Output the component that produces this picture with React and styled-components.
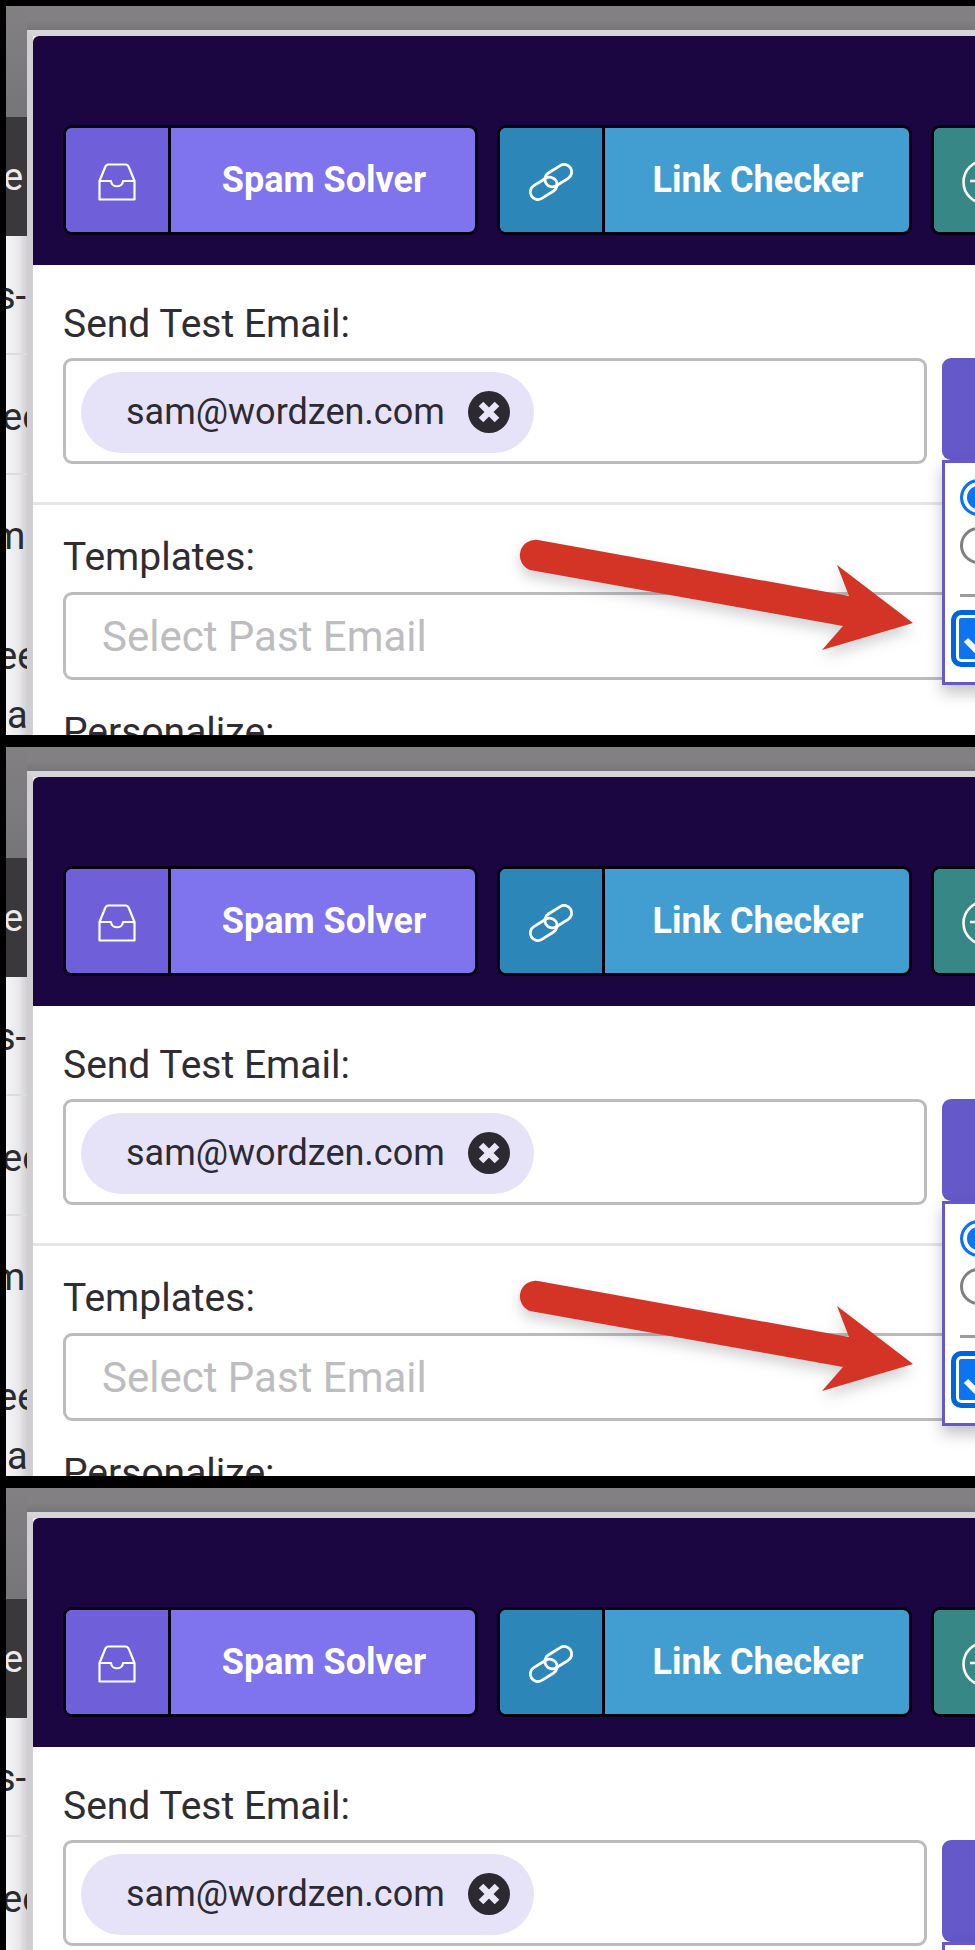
import React from "react";
import styled, { createGlobalStyle } from "styled-components";

const GlobalStyle = createGlobalStyle`
  html, body {
    margin: 0;
    height: 1950px;
    overflow: hidden;
    background: #000;
    font-family: Roboto, "Liberation Sans", sans-serif;
  }
`;

const Page = styled.div`
  display: flex;
  flex-direction: column;
  gap: 12px;
  height: 1950px;
  padding: 6px 0 0 6px;
  box-sizing: border-box;
  overflow: hidden;
`;

const Frame = styled.section`
  display: flex;
  flex: 0 0 729px;
  height: 729px;
  overflow: hidden;
  background: #fff;
`;

const SideStrip = styled.aside`
  flex: 0 0 21px;
  display: flex;
  flex-direction: column;
  overflow: hidden;
  background: linear-gradient(90deg, #f4f3f5 0%, #e9e8ea 60%, #d2d0d3 100%);
`;

const StripTop = styled.div`
  flex: 0 0 111px;
  background: linear-gradient(180deg, #828083 0%, #767578 100%);
`;

const StripRow = styled.div`
  flex: 0 0 ${(p) => p.$h}px;
  display: flex;
  align-items: center;
  padding-top: ${(p) => p.$pad || 0}px;
  text-indent: ${(p) => p.$shift}px;
  color: ${(p) => (p.$dark ? "#eceaec" : "#2b2a2c")};
  background: ${(p) => (p.$dark ? "#3a383a" : "transparent")};
  font-size: 38px;
  line-height: 40px;
  white-space: nowrap;
  overflow: hidden;
  border-bottom: ${(p) => (p.$line ? "2px solid #dcdbdd" : "none")};
  box-sizing: border-box;
`;

const Main = styled.div`
  flex: 1;
  min-width: 0;
  display: flex;
  flex-direction: column;
`;

const TopShade = styled.div`
  flex: 0 0 24px;
  background: linear-gradient(180deg, #828083 0%, #828083 60%, #767578 100%);
`;

const Modal = styled.div`
  position: relative;
  flex: 1;
  min-height: 0;
  border-top: 6px solid #d6d4d8;
  border-left: 6px solid #d0ced2;
  background: #fff;
  overflow: hidden;
`;

const Header = styled.header`
  height: 229px;
  box-sizing: border-box;
  padding: 89px 0 0 30px;
  display: flex;
  gap: 19px;
  background: #1c0642;
  border-top-left-radius: 6px;
  overflow: hidden;
`;

const Tool = styled.div`
  flex: 0 0 415px;
  height: 110px;
  box-sizing: border-box;
  display: flex;
  border: 3px solid #06010f;
  border-radius: 9px;
  overflow: hidden;
  background: ${(p) => p.$main};
`;

const ToolIcon = styled.div`
  flex: 0 0 105px;
  display: flex;
  align-items: center;
  justify-content: center;
  padding-top: 3px;
  box-sizing: border-box;
  color: #fff;
  background: ${(p) => p.$dark};
  border-right: 3px solid #06010f;
`;

const ToolLabel = styled.div`
  flex: 1;
  display: flex;
  align-items: center;
  justify-content: center;
  padding-left: 2px;
  color: #fff;
  font-size: 36px;
  font-weight: 700;
`;

const Body = styled.div`
  display: flex;
  flex-direction: column;
`;

const Section = styled.div`
  padding: ${(p) => p.$pad}px 0 0 30px;
  border-bottom: ${(p) => (p.$line ? "3px solid #e6e5e7" : "none")};
  height: ${(p) => p.$h}px;
  box-sizing: border-box;
`;

const Label = styled.div`
  color: #2f2d31;
  font-size: 39px;
  line-height: 40px;
  margin-top: ${(p) => p.$top || 0}px;
  margin-bottom: ${(p) => p.$gap || 0}px;
  white-space: nowrap;
`;

const FieldRow = styled.div`
  display: flex;
  align-items: flex-start;
  gap: 15px;
`;

const Field = styled.div`
  flex: 0 0 ${(p) => p.$w}px;
  width: ${(p) => p.$w}px;
  height: ${(p) => p.$h}px;
  box-sizing: border-box;
  display: flex;
  align-items: center;
  padding: 0 15px;
  border: 3px solid #bcbbbe;
  border-radius: 9px;
  background: #fff;
`;

const Chip = styled.div`
  height: 81px;
  margin-top: 2px;
  display: flex;
  align-items: center;
  gap: 23px;
  padding: 0 24px 0 45px;
  border-radius: 41px;
  background: #e6e3f8;
  color: #2c2a33;
  font-size: 36px;
  white-space: nowrap;
`;

const Placeholder = styled.span`
  padding-left: 21px;
  color: #bdbcbf;
  font-size: 42px;
  white-space: nowrap;
`;

const SendButton = styled.div`
  flex: 0 0 120px;
  height: 102px;
  background: #6558c8;
  border-radius: 9px 0 0 9px;
`;

const Popover = styled.div`
  position: absolute;
  left: 909px;
  top: 424px;
  width: 200px;
  height: 225px;
  box-sizing: border-box;
  padding: 16px 0 0 15px;
  display: flex;
  flex-direction: column;
  border: 3px solid #6558c8;
  background: #fff;
  box-shadow: 0 8px 14px rgba(60, 60, 70, 0.3);
`;

const Radio = styled.span`
  display: block;
  width: 37px;
  height: 37px;
  box-sizing: border-box;
  margin-bottom: 11px;
  border-radius: 50%;
  border: 3px solid ${(p) => (p.$on ? "#0b74f1" : "#7f7f82")};
  background: ${(p) => (p.$on ? "#0b74f1" : "#fff")};
  box-shadow: ${(p) => (p.$on ? "inset 0 0 0 4px #fff" : "none")};
`;

const MenuLine = styled.div`
  height: 3px;
  margin: 19px 0 13px;
  background: #9c9b9e;
`;

const CheckBox = styled.span`
  display: flex;
  align-items: center;
  justify-content: center;
  width: 57px;
  height: 57px;
  margin-left: -9px;
  box-sizing: border-box;
  border: 5px solid #0064dc;
  border-radius: 10px;
  background: #0b74f1;
  box-shadow: inset 0 0 0 3px #fff;
  color: #fff;
`;

const ArrowMark = styled.svg`
  position: absolute;
  left: 467px;
  top: 464px;
  overflow: visible;
  pointer-events: none;
  filter: drop-shadow(0 7px 7px rgba(90, 90, 100, 0.28));
`;

function InboxIcon() {
  return (
    <svg width="38" height="38" viewBox="0 0 38 38" fill="none" stroke="currentColor" strokeWidth="2.2" strokeLinejoin="round">
      <path d="M1.5 36.5V18L7 4.5C7.6 2.8 8.6 1.5 10.5 1.5H27.5C29.4 1.5 30.4 2.8 31 4.5L36.5 18V36.5Z" />
      <path d="M1.5 18H13C13.5 25 24.5 25 25 18H36.5" />
    </svg>
  );
}

function LinkIcon() {
  return (
    <svg width="48" height="40" viewBox="0 0 48 40" fill="none" stroke="currentColor" strokeWidth="2.8">
      <g transform="rotate(-32 24 20)">
        <rect x="0" y="14" width="29" height="15" rx="7.5" />
        <rect x="19" y="11" width="29" height="15" rx="7.5" />
      </g>
    </svg>
  );
}

function ClockIcon() {
  return (
    <svg width="48" height="48" viewBox="0 0 48 48" fill="none" stroke="currentColor" strokeWidth="2.6">
      <circle cx="24" cy="24" r="21.5" />
      <path d="M9 23H24L28 14" />
    </svg>
  );
}

function CloseIcon() {
  return (
    <svg width="42" height="42" viewBox="0 0 42 42">
      <circle cx="21" cy="21" r="21" fill="#2c2a30" />
      <path d="M13 13L29 29M29 13L13 29" stroke="#e9e6f8" strokeWidth="6.5" />
    </svg>
  );
}

function ComposeFrame() {
  return (
    <Frame>
      <SideStrip>
        <StripTop />
        <StripRow $h={119} $dark $shift={-3}>e</StripRow>
        <StripRow $h={119} $line $pad={2} $shift={-10}>s-</StripRow>
        <StripRow $h={120} $line $pad={6} $shift={-4}>ec</StripRow>
        <StripRow $h={120} $pad={2} $shift={-14}>m</StripRow>
        <StripRow $h={82} $pad={40} $shift={-9}>ee</StripRow>
        <StripRow $h={58} $pad={17} $shift={1}>a</StripRow>
      </SideStrip>
      <Main>
        <TopShade />
        <Modal>
          <Header>
            <Tool $main="#8073ee">
              <ToolIcon $dark="#6f5fd9"><InboxIcon /></ToolIcon>
              <ToolLabel>Spam Solver</ToolLabel>
            </Tool>
            <Tool $main="#429dd0">
              <ToolIcon $dark="#2c87b8"><LinkIcon /></ToolIcon>
              <ToolLabel>Link Checker</ToolLabel>
            </Tool>
            <Tool $main="#3f9a9a">
              <ToolIcon $dark="#378787"><ClockIcon /></ToolIcon>
            </Tool>
          </Header>
          <Body>
            <Section $h={240} $pad={39} $line>
              <Label $gap={14}>Send Test Email:</Label>
              <FieldRow>
                <Field $w={864} $h={106}>
                  <Chip>
                    sam@wordzen.com
                    <CloseIcon />
                  </Chip>
                </Field>
                <SendButton />
              </FieldRow>
            </Section>
            <Section $h={230} $pad={32}>
              <Label $gap={15}>Templates:</Label>
              <Field $w={1000} $h={88}>
                <Placeholder>Select Past Email</Placeholder>
              </Field>
              <Label $top={32}>Personalize:</Label>
            </Section>
          </Body>
          <ArrowMark width="420" height="160" viewBox="0 0 420 160">
            <path
              d="M38 40L349 96L337 65L413 123L322 150L343 126L30 70A15.6 15.6 0 0 1 38 40Z"
              fill="#d33426"
            />
          </ArrowMark>
          <Popover>
            <Radio $on />
            <Radio />
            <MenuLine />
            <CheckBox>
              <svg width="40" height="40" viewBox="0 0 40 40" fill="none" stroke="currentColor" strokeWidth="6">
                <path d="M6 21L15 30L34 8" />
              </svg>
            </CheckBox>
          </Popover>
        </Modal>
      </Main>
    </Frame>
  );
}

export default function App() {
  return (
    <>
      <GlobalStyle />
      <Page>
        <ComposeFrame />
        <ComposeFrame />
        <ComposeFrame />
      </Page>
    </>
  );
}
